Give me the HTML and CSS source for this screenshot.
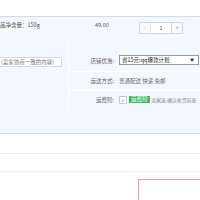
FILE: index.html
```html
<!DOCTYPE html>
<html>
<head>
<meta charset="utf-8">
<link rel="stylesheet" href="styles.css">
</head>
<body>
<div class="top"></div>
<div class="panel">
  <div class="item-row">
    <div class="spec">品净含量：150g</div>
    <div class="price">49.00</div>
    <div class="qty">
      <span class="qbtn minus">-</span>
      <span class="qval">1</span>
      <span class="qbtn plus">+</span>
    </div>
  </div>
  <div class="order-row">
    <div class="left-col">
      <div class="memo">(卖家协商一致的内容)</div>
    </div>
    <div class="right-col">
      <div class="opt first">
        <span class="label">店铺优惠:</span>
        <div class="select"><span>省15元:qq爆款计划</span><span class="arrow">▼</span></div>
      </div>
      <div class="opt">
        <span class="label">运送方式:</span>
        <span class="val">普通配送 快递 免邮</span>
      </div>
      <div class="opt">
        <span class="label">运费险:</span>
        <span class="check">✓</span>
        <span class="badge">运费险</span>
        <span class="note">卖家送,确认收货前退</span>
      </div>
    </div>
  </div>
</div>
<div class="line l1"></div>
<div class="line l2"></div>
<div class="pink-wrap"><div class="pink"></div></div>
</body>
</html>
```
FILE: styles.css
```css
html, body {
  margin: 0;
  padding: 0;
  background: #fff;
  overflow: hidden;
}
body {
  width: 200px;
  height: 200px;
  font-family: "Noto Sans CJK SC", "Liberation Sans", sans-serif;
  font-size: 5.5px;
  color: #555;
}
.top {
  height: 16px;
}
.panel {
  border-top: 1px solid #cddcf2;
  border-bottom: 1px solid #cddcf2;
  background: #f3f7fe;
  height: 116px;
}
.item-row {
  height: 20px;
  display: flex;
  align-items: flex-start;
  padding-top: 5px;
  box-sizing: border-box;
}
.spec {
  width: 95px;
  line-height: 7px;
  flex-shrink: 0;
}
.price {
  width: 44px;
  line-height: 7px;
  flex-shrink: 0;
}
.qty {
  display: flex;
  height: 10px;
  border: 1px solid #cbd8ea;
  background: #f7f9fc;
  flex-shrink: 0;
}
.qbtn {
  width: 10px;
  text-align: center;
  line-height: 10px;
  color: #aaa;
}
.qbtn.plus {
  border-left: 1px solid #cbd8ea;
  color: #777;
}
.qval {
  width: 20px;
  background: #fff;
  border-left: 1px solid #dde4ee;
  text-align: center;
  line-height: 10px;
  color: #7a3c5a;
}
.order-row {
  display: flex;
  height: 72px;
}
.left-col {
  width: 68px;
  flex-shrink: 0;
  border-right: 1px solid #fff;
  padding-top: 20px;
}
.memo {
  width: 60px;
  height: 8px;
  line-height: 8px;
  border: 1px solid #d2d9e2;
  border-left: none;
  background: #fff;
  color: #777;
  padding-left: 1px;
  white-space: nowrap;
  overflow: hidden;
}
.right-col {
  flex: 1;
  min-width: 0;
  display: flex;
  flex-direction: column;
}
.opt {
  display: flex;
  align-items: center;
  height: 19px;
  border-top: 1px solid #fff;
  white-space: nowrap;
  overflow: hidden;
}
.opt.first {
  border-top: none;
  height: 35px;
  align-items: flex-end;
  padding-bottom: 6px;
  box-sizing: border-box;
}
.label {
  width: 45px;
  flex-shrink: 0;
  text-align: right;
  margin-right: 5px;
  color: #666;
}
.select {
  width: 72px;
  flex-shrink: 0;
  height: 8px;
  line-height: 8px;
  border: 1px solid #999;
  background: #fff;
  color: #222;
  display: flex;
  justify-content: space-between;
  padding: 0 4px 0 2px;
}
.arrow {
  font-size: 4px;
}
.val {
  color: #666;
}
.check {
  flex-shrink: 0;
  width: 6px;
  height: 6px;
  border: 1px solid #ccc;
  background: #fff;
  font-size: 4px;
  line-height: 6px;
  text-align: center;
  color: #555;
  margin-right: 2px;
}
.badge {
  flex-shrink: 0;
  background: #3dba5f;
  color: #fff;
  padding: 0 2px;
  height: 7px;
  line-height: 7px;
  margin-right: 2px;
}
.note {
  color: #888;
  font-size: 4.8px;
}
.line {
  height: 1px;
  background: #eeeeee;
}
.l1 {
  margin-top: 19px;
}
.l2 {
  margin-top: 17px;
}
.pink-wrap {
  padding: 7px 0 0 138px;
}
.pink {
  height: 40px;
  border: 1px solid #f09aa8;
  border-right: none;
  background: #fff;
}
```
